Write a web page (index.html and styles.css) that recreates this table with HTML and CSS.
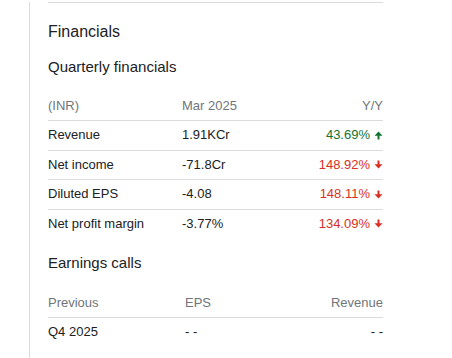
FILE: index.html
```html
<!DOCTYPE html>
<html>
<head>
<meta charset="utf-8">
<link rel="stylesheet" href="styles.css">
</head>
<body>
<div class="panel">
  <div class="divider"></div>
  <h2 class="title">Financials</h2>
  <h3 class="subtitle">Quarterly financials</h3>
  <div class="table quarterly">
    <div class="row head">
      <span>(INR)</span><span>Mar 2025</span><span class="num">Y/Y</span>
    </div>
    <div class="row">
      <span>Revenue</span><span>1.91KCr</span>
      <span class="num up">43.69%<svg class="arrow" viewBox="0 0 9 9"><path d="M4.5 0.5 L8.5 4.8 H5.5 V8.5 H3.5 V4.8 H0.5 Z"/></svg></span>
    </div>
    <div class="row">
      <span>Net income</span><span>-71.8Cr</span>
      <span class="num down">148.92%<svg class="arrow" viewBox="0 0 9 9"><path d="M4.5 8.5 L8.5 4.2 H5.5 V0.5 H3.5 V4.2 H0.5 Z"/></svg></span>
    </div>
    <div class="row">
      <span>Diluted EPS</span><span>-4.08</span>
      <span class="num down">148.11%<svg class="arrow" viewBox="0 0 9 9"><path d="M4.5 8.5 L8.5 4.2 H5.5 V0.5 H3.5 V4.2 H0.5 Z"/></svg></span>
    </div>
    <div class="row">
      <span>Net profit margin</span><span>-3.77%</span>
      <span class="num down">134.09%<svg class="arrow" viewBox="0 0 9 9"><path d="M4.5 8.5 L8.5 4.2 H5.5 V0.5 H3.5 V4.2 H0.5 Z"/></svg></span>
    </div>
  </div>
  <h3 class="subtitle earnings-title">Earnings calls</h3>
  <div class="table earnings">
    <div class="row head">
      <span>Previous</span><span>EPS</span><span class="num">Revenue</span>
    </div>
    <div class="row">
      <span>Q4 2025</span><span>- -</span><span class="num">- -</span>
    </div>
  </div>
</div>
</body>
</html>
```

FILE: styles.css
```css
html, body {
  margin: 0;
  padding: 0;
  background: #ffffff;
}
body {
  font-family: "Liberation Sans", Arial, sans-serif;
  color: #202124;
  overflow: hidden;
}
.panel {
  margin-left: 29px;
  border-left: 1px solid #dadce0;
  height: 358px;
  padding-left: 18px;
  box-sizing: border-box;
}
.panel > * {
  width: 335px;
}
.divider {
  margin-top: 2px;
  border-top: 1px solid #dadce0;
  height: 0;
}
.title {
  margin: 16.5px 0 0;
  font-size: 16px;
  line-height: 24px;
  font-weight: 400;
  color: #202124;
}
.subtitle {
  margin: 13.5px 0 0;
  font-size: 15px;
  line-height: 20px;
  font-weight: 400;
  color: #202124;
}
.table {
  margin-top: 14px;
  font-size: 13px;
}
.row {
  display: grid;
  align-items: center;
  line-height: 28.5px;
  border-bottom: 1px solid #dadce0;
}
.row:last-child {
  border-bottom: none;
}
.quarterly .row {
  grid-template-columns: 134px 1fr auto;
}
.earnings .row {
  grid-template-columns: 137px 1fr auto;
}
.head {
  color: #70757a;
  line-height: 29px;
}
.num {
  text-align: right;
  display: flex;
  align-items: center;
  justify-content: flex-end;
}
.up {
  color: #137333;
}
.down {
  color: #d93025;
}
.arrow {
  width: 9px;
  height: 9px;
  margin-left: 4px;
  fill: currentColor;
}
.earnings-title {
  margin-top: 15px;
}
.earnings {
  margin-top: 15px;
}
```
